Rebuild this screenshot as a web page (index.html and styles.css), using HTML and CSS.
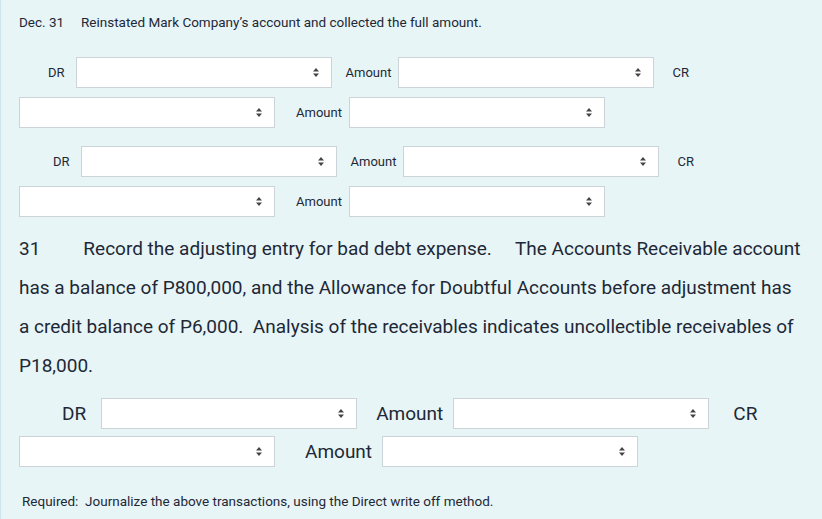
FILE: index.html
```html
<!DOCTYPE html>
<html lang="en">
<head>
    <meta charset="UTF-8">
    <meta name="viewport" content="width=device-width, initial-scale=1.0">
    <title>Journal Entries</title>
    <link rel="stylesheet" href="styles.css">
</head>
<body>
    <div class="sheet">
        <p class="entry-title"><span class="date">Dec. 31</span>Reinstated Mark Company’s account and collected the full amount.</p>

        <!-- first entry -->
        <div class="row row-dr first">
            <span class="lbl dr">DR</span>
            <span class="select"><svg width="6" height="9" viewBox="0 0 6 9"><path d="M3 0L6 3.5H0Z M3 9L0 5.5H6Z" fill="#444"/></svg></span>
            <span class="lbl amt">Amount</span>
            <span class="select"><svg width="6" height="9" viewBox="0 0 6 9"><path d="M3 0L6 3.5H0Z M3 9L0 5.5H6Z" fill="#444"/></svg></span>
            <span class="lbl cr">CR</span>
        </div>
        <div class="row row-cr">
            <span class="select"><svg width="6" height="9" viewBox="0 0 6 9"><path d="M3 0L6 3.5H0Z M3 9L0 5.5H6Z" fill="#444"/></svg></span>
            <span class="lbl amt">Amount</span>
            <span class="select"><svg width="6" height="9" viewBox="0 0 6 9"><path d="M3 0L6 3.5H0Z M3 9L0 5.5H6Z" fill="#444"/></svg></span>
        </div>

        <!-- second entry -->
        <div class="row row-dr second">
            <span class="lbl dr">DR</span>
            <span class="select"><svg width="6" height="9" viewBox="0 0 6 9"><path d="M3 0L6 3.5H0Z M3 9L0 5.5H6Z" fill="#444"/></svg></span>
            <span class="lbl amt">Amount</span>
            <span class="select"><svg width="6" height="9" viewBox="0 0 6 9"><path d="M3 0L6 3.5H0Z M3 9L0 5.5H6Z" fill="#444"/></svg></span>
            <span class="lbl cr">CR</span>
        </div>
        <div class="row row-cr">
            <span class="select"><svg width="6" height="9" viewBox="0 0 6 9"><path d="M3 0L6 3.5H0Z M3 9L0 5.5H6Z" fill="#444"/></svg></span>
            <span class="lbl amt">Amount</span>
            <span class="select"><svg width="6" height="9" viewBox="0 0 6 9"><path d="M3 0L6 3.5H0Z M3 9L0 5.5H6Z" fill="#444"/></svg></span>
        </div>

        <p class="problem"><span class="num">31</span>Record the adjusting entry for bad debt expense.&nbsp;&nbsp;&nbsp;&nbsp; The Accounts Receivable account has a balance of P800,000, and the Allowance for Doubtful Accounts before adjustment has a credit balance of P6,000.&nbsp; Analysis of the receivables indicates uncollectible receivables of P18,000.</p>

        <!-- adjusting entry -->
        <div class="row row-dr big">
            <span class="lbl dr">DR</span>
            <span class="select"><svg width="6" height="9" viewBox="0 0 6 9"><path d="M3 0L6 3.5H0Z M3 9L0 5.5H6Z" fill="#444"/></svg></span>
            <span class="lbl amt">Amount</span>
            <span class="select"><svg width="6" height="9" viewBox="0 0 6 9"><path d="M3 0L6 3.5H0Z M3 9L0 5.5H6Z" fill="#444"/></svg></span>
            <span class="lbl cr">CR</span>
        </div>
        <div class="row row-cr big">
            <span class="select"><svg width="6" height="9" viewBox="0 0 6 9"><path d="M3 0L6 3.5H0Z M3 9L0 5.5H6Z" fill="#444"/></svg></span>
            <span class="lbl amt">Amount</span>
            <span class="select"><svg width="6" height="9" viewBox="0 0 6 9"><path d="M3 0L6 3.5H0Z M3 9L0 5.5H6Z" fill="#444"/></svg></span>
        </div>

        <p class="required">Required:&nbsp; Journalize the above transactions, using the Direct write off method.</p>
    </div>
</body>
</html>
```

FILE: styles.css
```css
/* Base */
body {
    margin: 0;
    padding: 0;
    font-family: 'Roboto', 'Liberation Sans', sans-serif;
    color: #1e2836;
    background: #e7f5f7;
}

.sheet {
    min-height: 519px;
    box-sizing: border-box;
    border-left: 1px solid #cfe3ea;
    padding: 14px 0 0 18px;
}

p {
    margin: 0;
}

/* Titles */
.entry-title {
    font-size: 13.5px;
    line-height: 17px;
}

.date {
    display: inline-block;
    width: 62px;
}

/* Journal rows */
.row {
    display: flex;
    align-items: center;
    font-size: 13px;
}

.row-dr.first {
    margin-top: 26px;
    padding-left: 29px;
}

.row-dr.second {
    margin-top: 18px;
    padding-left: 34px;
}

.row-cr {
    margin-top: 9px;
}

.select {
    display: flex;
    align-items: center;
    justify-content: flex-end;
    box-sizing: border-box;
    width: 256px;
    height: 31px;
    padding-right: 12px;
    background: #fff;
    border: 1px solid #cdd4d9;
}

.row-dr .dr {
    margin-right: 11px;
}

.row-dr .amt {
    margin: 0 7px 0 14px;
}

.row-dr .cr {
    margin-left: 18px;
}

.row-cr .amt {
    margin: 0 7px 0 21px;
}

/* Problem text */
.problem {
    margin-top: 12px;
    width: 785px;
    font-size: 19px;
    line-height: 39px;
}

.num {
    margin-right: 43px;
}

/* Larger entry */
.row.big {
    font-size: 19px;
}

.row-dr.big {
    margin-top: 13px;
    padding-left: 43px;
}

.row-dr.big .dr {
    margin-right: 15px;
}

.row-dr.big .amt {
    margin: 0 10px 0 19px;
}

.row-dr.big .cr {
    margin-left: 24px;
}

.row-cr.big {
    margin-top: 7px;
}

.row-cr.big .amt {
    margin: 0 10px 0 30px;
}

.required {
    margin-top: 26px;
    padding-left: 3px;
    font-size: 13.5px;
    line-height: 17px;
}
```
